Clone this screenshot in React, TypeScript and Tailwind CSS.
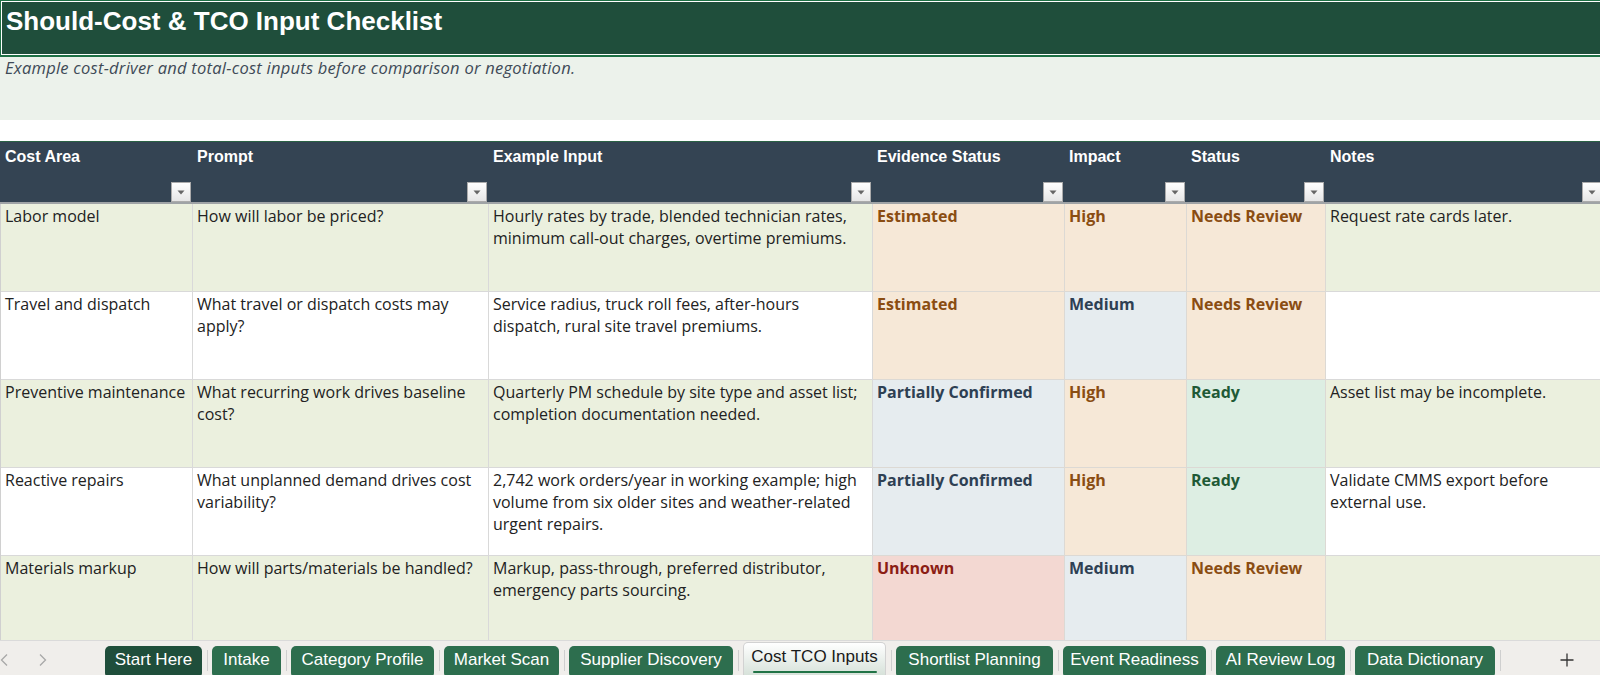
import React from "react";

type Tone = "peach" | "blue" | "green" | "red";

const toneCls: Record<Tone, string> = {
  peach: "bg-[#F6E8D7] text-[#8A4D12]",
  blue: "bg-[#E6ECEF] text-[#2E4053]",
  green: "bg-[#DDEEE3] text-[#1F5A36]",
  red: "bg-[#F3D8D2] text-[#8B1D14]",
};

type Row = {
  bg: string;
  area: string;
  prompt: string;
  example: string;
  ev: [string, Tone];
  imp: [string, Tone];
  st: [string, Tone];
  notes: string;
};

const GREEN = "bg-[#EBF0DE]";
const WHITE = "bg-white";

const rows: Row[] = [
  {
    bg: GREEN,
    area: "Labor model",
    prompt: "How will labor be priced?",
    example: "Hourly rates by trade, blended technician rates,\nminimum call-out charges, overtime premiums.",
    ev: ["Estimated", "peach"],
    imp: ["High", "peach"],
    st: ["Needs Review", "peach"],
    notes: "Request rate cards later.",
  },
  {
    bg: WHITE,
    area: "Travel and dispatch",
    prompt: "What travel or dispatch costs may\napply?",
    example: "Service radius, truck roll fees, after-hours\ndispatch, rural site travel premiums.",
    ev: ["Estimated", "peach"],
    imp: ["Medium", "blue"],
    st: ["Needs Review", "peach"],
    notes: "",
  },
  {
    bg: GREEN,
    area: "Preventive maintenance",
    prompt: "What recurring work drives baseline\ncost?",
    example: "Quarterly PM schedule by site type and asset list;\ncompletion documentation needed.",
    ev: ["Partially Confirmed", "blue"],
    imp: ["High", "peach"],
    st: ["Ready", "green"],
    notes: "Asset list may be incomplete.",
  },
  {
    bg: WHITE,
    area: "Reactive repairs",
    prompt: "What unplanned demand drives cost\nvariability?",
    example:
      "2,742 work orders/year in working example; high\nvolume from six older sites and weather-related\nurgent repairs.",
    ev: ["Partially Confirmed", "blue"],
    imp: ["High", "peach"],
    st: ["Ready", "green"],
    notes: "Validate CMMS export before\nexternal use.",
  },
  {
    bg: GREEN,
    area: "Materials markup",
    prompt: "How will parts/materials be handled?",
    example: "Markup, pass-through, preferred distributor,\nemergency parts sourcing.",
    ev: ["Unknown", "red"],
    imp: ["Medium", "blue"],
    st: ["Needs Review", "peach"],
    notes: "",
  },
];

const headers = ["Cost Area", "Prompt", "Example Input", "Evidence Status", "Impact", "Status", "Notes"];

const tabs: { label: string; w: string; kind: "dark" | "normal" | "active" }[] = [
  { label: "Start Here", w: "w-[97px]", kind: "dark" },
  { label: "Intake", w: "w-[69px]", kind: "normal" },
  { label: "Category Profile", w: "w-[143px]", kind: "normal" },
  { label: "Market Scan", w: "w-[115px]", kind: "normal" },
  { label: "Supplier Discovery", w: "w-[164px]", kind: "normal" },
  { label: "Cost TCO Inputs", w: "w-[143px]", kind: "active" },
  { label: "Shortlist Planning", w: "w-[157px]", kind: "normal" },
  { label: "Event Readiness", w: "w-[143px]", kind: "normal" },
  { label: "AI Review Log", w: "w-[129px]", kind: "normal" },
  { label: "Data Dictionary", w: "w-[140px]", kind: "normal" },
];

const COLS = "grid grid-cols-[192px_296px_384px_192px_122px_139px_278px]";

function FilterButton() {
  return (
    <div className="absolute right-[1px] bottom-0 w-[20px] h-[20px] border border-[#ABABAB] bg-gradient-to-b from-white to-[#E6E6E6] flex items-center justify-center">
      <svg width="8" height="5" viewBox="0 0 8 5">
        <path d="M0.5 0.5 L7.5 0.5 L4 4.5 Z" fill="#666666" />
      </svg>
    </div>
  );
}

function TextCell({ text, bg }: { text: string; bg: string }) {
  return (
    <div
      className={`${bg} border-r border-b border-[#D9D9D9] px-[4px] pt-[1px] text-[16px] leading-[22px] text-[#222222] whitespace-pre overflow-hidden`}
    >
      {text}
    </div>
  );
}

function ToneCell({ v }: { v: [string, Tone] }) {
  return (
    <div
      className={`${toneCls[v[1]]} border-r border-b border-[#DCD9D4] px-[4px] pt-[1px] text-[16px] leading-[22px] font-bold whitespace-pre overflow-hidden`}
    >
      {v[0]}
    </div>
  );
}

function Tab({ label, w, kind }: { label: string; w: string; kind: "dark" | "normal" | "active" }) {
  if (kind === "active") {
    return (
      <div
        className={`${w} h-[33px] mt-[1px] rounded-t-[5px] border border-b-0 border-[#D2D2D2] bg-gradient-to-b from-white to-[#D7E2DA] flex flex-col items-center justify-start pt-[4px] text-[17px] leading-[20px] text-[#1A1A1A]`}
      >
        <span>{label}</span>
        <div className="mt-[4px] h-[2px] w-[124px] bg-[#217346] rounded-full" />
      </div>
    );
  }
  return (
    <div
      className={`${w} h-[30px] mt-[5px] rounded-t-[5px] rounded-b-[3px] ${
        kind === "dark" ? "bg-[#1F4E3B]" : "bg-[#2D6E4E]"
      } flex items-center justify-center text-[17px] leading-[20px] text-white pb-[2px]`}
    >
      {label}
    </div>
  );
}

function Sep() {
  return (
    <div className="w-[10px] h-full flex justify-center items-center pt-[4px]">
      <div className="w-px h-[21px] bg-[#CFCFCF]" />
    </div>
  );
}

export default function App() {
  return (
    <div className="w-[1600px] h-[675px] overflow-hidden bg-white flex flex-col font-['Open_Sans',sans-serif]">
      {/* Title */}
      <div className="h-[57px] shrink-0 border-t border-b-2 border-l border-[#1E7145]">
        <div className="h-full border-t border-b border-l border-white bg-[#1F4E3B] pl-[4px] pt-[3px] font-['Liberation_Sans',Arial,sans-serif] font-bold text-[26px] leading-[32px] text-white whitespace-nowrap">
          Should-Cost &amp; TCO Input Checklist
        </div>
      </div>
      {/* Subtitle */}
      <div className="h-[63px] shrink-0 bg-[#ECF2EB] pl-[5px] pt-[1px] italic text-[16.5px] leading-[20px] tracking-[0.25px] text-[#3E4A57] whitespace-nowrap">
        Example cost-driver and total-cost inputs before comparison or negotiation.
      </div>
      {/* spacer */}
      <div className="h-[21px] shrink-0 bg-white" />
      {/* Header */}
      <div className={`${COLS} h-[63px] shrink-0 bg-[#344453] border-t border-[#2B6245] border-b-2 border-b-[#9FA3A6]`}>
        {headers.map((h) => (
          <div
            key={h}
            className="relative pl-[5px] pt-[5px] font-['Liberation_Sans',Arial,sans-serif] font-bold text-[16px] leading-[20px] text-white whitespace-nowrap"
          >
            {h}
            <FilterButton />
          </div>
        ))}
      </div>
      {/* Rows */}
      <div className="flex-1 overflow-hidden border-l border-[#D0D0D0]">
        {rows.map((r, i) => (
          <div key={i} className={`${COLS} h-[88px]`}>
            <TextCell text={r.area} bg={r.bg} />
            <TextCell text={r.prompt} bg={r.bg} />
            <TextCell text={r.example} bg={r.bg} />
            <ToneCell v={r.ev} />
            <ToneCell v={r.imp} />
            <ToneCell v={r.st} />
            <TextCell text={r.notes} bg={r.bg} />
          </div>
        ))}
      </div>
      {/* Sheet tabs */}
      <div className="h-[35px] shrink-0 bg-[#F0EEEB] border-t border-[#DADADA] flex items-start font-['Liberation_Sans',Arial,sans-serif]">
        <div className="w-[105px] h-full flex items-center pt-[4px]">
          <svg width="10" height="14" viewBox="0 0 10 14">
            <path d="M7 1.5 L1.5 7 L7 12.5" fill="none" stroke="#A8A8A8" strokeWidth="1.3" />
          </svg>
          <svg width="10" height="14" viewBox="0 0 10 14" className="ml-[28px]">
            <path d="M2 1.5 L7.5 7 L2 12.5" fill="none" stroke="#A8A8A8" strokeWidth="1.3" />
          </svg>
        </div>
        {tabs.map((t) => (
          <React.Fragment key={t.label}>
            <Tab {...t} />
            <Sep />
          </React.Fragment>
        ))}
        <div className="flex-1 h-full flex items-center pt-[4px] pl-[55px]">
          <svg width="14" height="14" viewBox="0 0 14 14">
            <path d="M7 0.5 V13.5 M0.5 7 H13.5" stroke="#333333" strokeWidth="1.3" />
          </svg>
        </div>
      </div>
    </div>
  );
}
